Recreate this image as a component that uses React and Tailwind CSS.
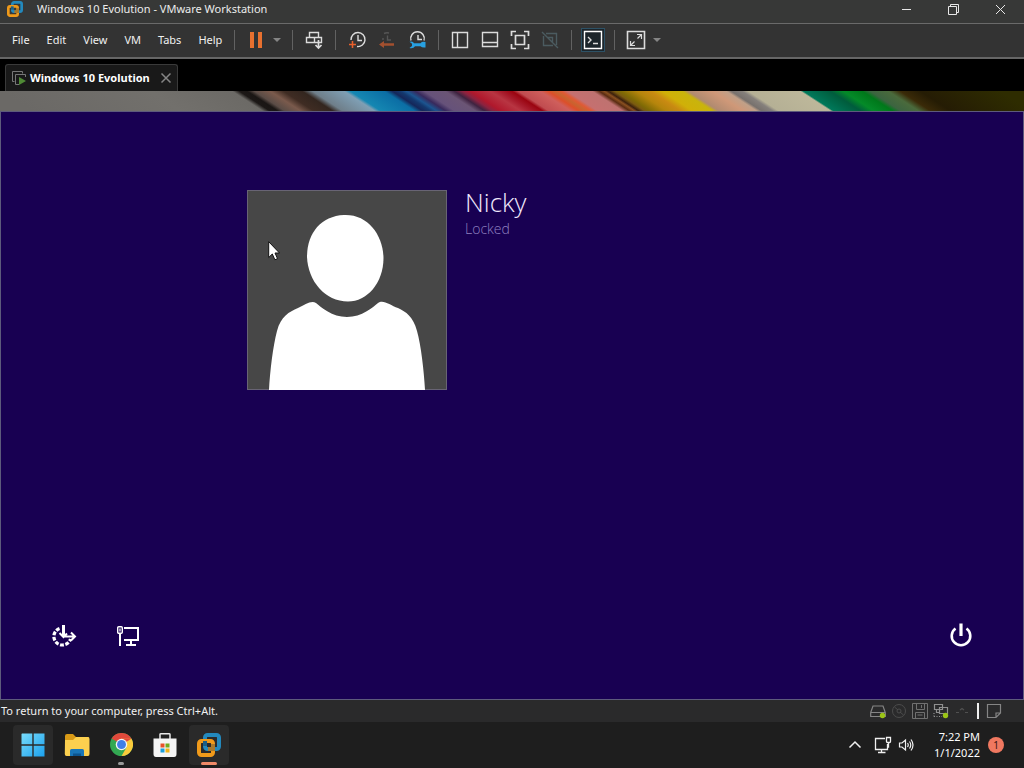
import React from "react";

const STRIPES = [
  [0, "#6b6966"], [150, "#72706c"], [232, "#6c6a66"], [239, "#1c1816"], [247, "#1a1614"], [254, "#5a4c46"],
  [270, "#7a5a4c"], [283, "#3f2c23"], [302, "#33261f"], [312, "#6f7f8a"], [344, "#7f9fb4"],
  [350, "#1587b2"], [384, "#0b6ea5"], [392, "#15275a"], [400, "#14386e"], [406, "#1c5590"],
  [415, "#38295c"], [424, "#66527a"], [445, "#6b5575"], [454, "#3f2340"], [462, "#8a2340"],
  [470, "#b0182c"], [490, "#b83542"], [500, "#a81c2c"], [512, "#9a0410"], [518, "#c04c50"], [540, "#cf5f5c"],
  [548, "#dc4f2a"], [555, "#c8642f"], [561, "#e05a35"], [567, "#c57070"], [592, "#bf7270"],
  [599, "#5a2c12"], [604, "#8a5020"], [608, "#3c200c"], [614, "#7a5a10"], [620, "#7f6a05"],
  [636, "#b5850c"], [650, "#c98a12"], [662, "#d0b008"], [682, "#c9b40c"], [688, "#b08a70"],
  [712, "#cf9878"], [726, "#c0a088"], [731, "#77716d"], [742, "#85807c"], [748, "#b5b095"],
  [800, "#bdb79a"], [803, "#00785a"], [830, "#005c3c"], [843, "#048a28"], [862, "#00781a"],
  [870, "#3c6440"], [888, "#4a6a3c"], [900, "#3a2a08"], [920, "#251c04"], [1000, "#2e2c00"],
];

function WallpaperStrip() {
  return (
    <svg className="block h-5 w-full" viewBox="0 0 1024 20" preserveAspectRatio="none" aria-hidden="true">
      <defs>
        <linearGradient id="stripes" gradientUnits="userSpaceOnUse" x1="0" y1="0" x2="1024" y2="0" gradientTransform="skewX(57)">
          {STRIPES.map(([x, color]) => (
            <stop key={x} offset={x / 1024} stopColor={color} />
          ))}
        </linearGradient>
      </defs>
      <rect width="1024" height="20" fill="url(#stripes)" />
    </svg>
  );
}

function VmwareLogo({ className }) {
  return (
    <svg className={className} viewBox="0 0 24 24" fill="none" strokeWidth="4" aria-hidden="true">
      <rect x="8" y="2" width="14" height="14" rx="2.5" stroke="#2389bd" />
      <rect x="2" y="8" width="14" height="14" rx="2.5" stroke="#f09a1a" />
      <path d="M8 13V8" stroke="#1b5f86" />
      <path d="M11 16H16V11" stroke="#a8792c" />
    </svg>
  );
}

function Icon({ children, className = "size-6", ...rest }) {
  return (
    <svg className={className} viewBox="0 0 24 24" fill="none" stroke="#dcdcdc" strokeWidth="1.4" aria-hidden="true" {...rest}>
      {children}
    </svg>
  );
}

function Tool({ label, children, className = "" }) {
  return (
    <button type="button" aria-label={label} className={`flex size-6 shrink-0 items-center justify-center ${className}`}>
      {children}
    </button>
  );
}

function Caret({ label }) {
  return (
    <button type="button" aria-label={label} className="ml-[3px] flex h-6 w-3 shrink-0 items-center justify-center">
      <svg className="h-1 w-2" viewBox="0 0 8 4" aria-hidden="true">
        <path d="M0 0H8L4 4Z" fill="#858585" />
      </svg>
    </button>
  );
}

function Separator() {
  return <div className="mx-[9px] h-5 w-px shrink-0 bg-[#626262]" />;
}

function TitleBar() {
  return (
    <header className="flex h-[23px] shrink-0 items-center bg-[#373837] pl-[7px]">
      <VmwareLogo className="mb-[6px] size-4" />
      <h1 className="mb-[5px] ml-[14px] grow text-[11px] leading-4 text-[#ececec]">Windows 10 Evolution - VMware Workstation</h1>
      <div className="mb-[5px] flex">
        <button type="button" aria-label="Minimize" className="flex h-4 w-[47px] items-center justify-center">
          <svg className="size-[11px]" viewBox="0 0 11 11" stroke="#e8e8e8" aria-hidden="true"><path d="M1 5.5H10" /></svg>
        </button>
        <button type="button" aria-label="Restore" className="flex h-4 w-[47px] items-center justify-center">
          <svg className="size-[11px]" viewBox="0 0 11 11" fill="none" stroke="#e8e8e8" aria-hidden="true">
            <path d="M.5 2.5H8.500V10.500H.5ZM2.500 2.500V.5H10.500V8.500H8.500" />
          </svg>
        </button>
        <button type="button" aria-label="Close" className="flex h-4 w-[47px] items-center justify-center">
          <svg className="size-[11px]" viewBox="0 0 11 11" stroke="#e8e8e8" aria-hidden="true"><path d="M1 1L10 10M10 1L1 10" /></svg>
        </button>
      </div>
    </header>
  );
}

function MenuBar() {
  return (
    <div className="flex h-9 shrink-0 items-center border-t border-b-2 border-t-[#6a6a6a] border-b-[#666666] bg-[#333333] pb-px">
      <nav className="flex gap-[17px] pr-[3px] pl-3 text-[11px] leading-4 text-[#f0f0f0]">
        {["File", "Edit", "View", "VM", "Tabs", "Help"].map((name) => (
          <button key={name} type="button">{name}</button>
        ))}
      </nav>
      <Separator />
      <Tool label="Suspend">
        <svg className="size-6" viewBox="0 0 24 24" fill="#e8702f" aria-hidden="true">
          <path d="M6 4H10V20H6ZM14 4H18V20H14Z" />
        </svg>
      </Tool>
      <Caret label="Power options" />
      <Separator />
      <Tool label="Send Ctrl+Alt+Del">
        <Icon>
          <path d="M7.500 4.500H16.500V9.500H7.500ZM4.500 9.500H12.500V14.500H4.500ZM12.500 9.500H19.500V14.500H12.500" />
          <path d="M16.500 12V20M13.500 17L16.500 20L19.500 17" strokeWidth="1.700" />
        </Icon>
      </Tool>
      <Separator />
      <div className="flex gap-[6px]">
        <Tool label="Take snapshot">
          <Icon>
            <path d="M6 12A7 7 0 1 1 12 18.500" />
            <path d="M13 7V12.500H17" />
            <path d="M7.500 13V20M4 16.500H11" stroke="#e8602c" strokeWidth="1.600" />
          </Icon>
        </Tool>
        <Tool label="Revert snapshot">
          <Icon>
            <path d="M9 5.500A7 7 0 0 1 14 5M12.500 7.500V12H16M8 10V12" stroke="#565656" />
            <path d="M4 16.500L9 13V15.300H19V17.700H9V20Z" fill="#a3502f" stroke="none" />
          </Icon>
        </Tool>
        <Tool label="Manage snapshots">
          <Icon>
            <path d="M6 12.500A6.800 6.800 0 1 1 19 12.500" />
            <path d="M13 7V11.500H17" />
            <path d="M9 15.200H15.500Q17 13.200 20.500 14V19.500Q17 20 15.500 18.200H10Q8.500 20.800 4.500 20L7 18V15.800L4.500 13.800Q8 12.800 9 15.200Z" fill="#28a0e0" stroke="none" />
          </Icon>
        </Tool>
      </div>
      <Separator />
      <div className="flex gap-[6px]">
        <Tool label="Show library">
          <Icon><path d="M4.500 4.500H19.500V19.500H4.500ZM9.500 4.500V19.500" /></Icon>
        </Tool>
        <Tool label="Show thumbnail bar">
          <Icon><path d="M4.500 4.500H19.500V18.500H4.500ZM4.500 14.500H19.500" /></Icon>
        </Tool>
        <Tool label="Full screen">
          <Icon><path d="M7.500 7.500H16.500V16.500H7.500ZM3.500 8V3.500H8M16 3.500H20.500V8M20.500 16V20.500H16M8 20.500H3.500V16" strokeWidth="1.700" /></Icon>
        </Tool>
        <Tool label="Unity">
          <Icon><path d="M5.500 8V17.500H15M8 5.500H18.500V17M9.500 9.500H14.500V14M4 4L20 20" stroke="#4b5b60" /></Icon>
        </Tool>
      </div>
      <Separator />
      <Tool label="Console view" className="border border-[#2d5165] bg-[#1c252b]">
        <Icon className="size-6 shrink-0">
          <path d="M3.500 3.500H20.500V20.500H3.500Z" stroke="#ffffff" />
          <path d="M7 9L10 12L7 15M12 15.500H17" />
        </Icon>
      </Tool>
      <Separator />
      <Tool label="Stretch guest">
        <Icon>
          <path d="M3.500 3.500H20.500V20.500H3.500Z" strokeWidth="1.600" />
          <path d="M13 6.500H17.500V11M11 17.500H6.500V13M7 17L10.500 13.500M13.500 10.500L17 7" strokeWidth="1.200" />
        </Icon>
      </Tool>
      <Caret label="Stretch options" />
    </div>
  );
}

function TabBar() {
  return (
    <div className="flex h-8 shrink-0 items-end bg-black pl-[5px]">
      <div className="flex h-[27px] items-center rounded-t-[3px] border border-b-0 border-[#3a3a3a] bg-[#191919] px-[5px]">
        <Icon className="size-4" viewBox="0 0 16 16" stroke="#777777" strokeWidth="1">
          <path d="M11.500 3.500V1.500H1.500V11.500H3.500M14.500 7V4.500H4.500V14.500H8" />
          <path d="M8 7L15 11L8 15Z" fill="#4f8a35" stroke="none" />
        </Icon>
        <span className="ml-[3px] text-[11px] leading-4 font-bold text-white">Windows 10 Evolution</span>
        <button type="button" aria-label="Close tab" className="ml-[10px]">
          <svg className="size-3" viewBox="0 0 12 12" stroke="#858585" strokeWidth="1.500" aria-hidden="true"><path d="M1.500 1.500L10.500 10.500M10.500 1.500L1.500 10.500" /></svg>
        </button>
      </div>
    </div>
  );
}

function Pointer() {
  return (
    <svg className="absolute top-[51px] left-[21px] h-5 w-3" viewBox="0 0 12 20" aria-hidden="true">
      <path d="M.7 .7V16.500L4.300 13L6.900 18.800L9.500 17.600L7 12H11.500Z" fill="#ffffff" stroke="#111111" strokeWidth="1" />
    </svg>
  );
}

function LockScreen() {
  return (
    <main className="flex grow flex-col justify-between border border-[#5d5a7c] bg-[#180052]">
      <section className="flex pt-[78px] pl-[246px]">
        <div className="relative size-[200px] shrink-0">
          <svg className="size-full" viewBox="0 0 200 200" role="img" aria-label="User picture">
            <rect x=".5" y=".5" width="199" height="199" fill="#474747" stroke="#686474" />
            <path d="M97 25C121 24 136 45 136.500 68C136.500 93 120 111.500 101 111.500C78 111.500 61 91 60 67C60 43 74 26 97 25Z" fill="#ffffff" />
            <path d="M22 200C23 181 26 156 30 141C34 126 42 122 51 118C58 115 64 110 69 113C74 117 85 127 100 127C115 127 126 117 131 113C136 109 143 115 151 118C159 122 166 126 170 141C174 155 177 181 178 200Z" fill="#ffffff" />
          </svg>
          <Pointer />
        </div>
        <div className="-mt-1 ml-[18px] font-['Open_Sans','Noto_Sans',sans-serif] font-light">
          <h2 className="text-[26px] leading-8 text-[#f0e8fc]">Nicky</h2>
          <p className="text-[14px] leading-[22px] text-[#9080c0]">Locked</p>
        </div>
      </section>
      <div className="flex items-center px-12 pb-[49px]">
        <button type="button" aria-label="Ease of access">
          <svg className="size-7" viewBox="0 0 28 28" fill="none" stroke="#ffffff" aria-hidden="true">
            <path d="M10.500 6.500A8.500 8.500 0 1 0 21.500 17" strokeWidth="3.200" strokeDasharray="3.800 1.500" />
            <path d="M14.500 3V14.500" strokeWidth="3" />
            <path d="M10.500 11L14.500 15L18 11.500M14 14.500H26M22 10.500L26 14.500L22 18.500" strokeWidth="2" />
          </svg>
        </button>
        <button type="button" aria-label="Network" className="ml-9">
          <svg className="size-7" viewBox="0 0 28 28" fill="none" stroke="#ffffff" strokeWidth="2" aria-hidden="true">
            <rect x="4.700" y="4.700" width="4.600" height="6.600" rx="1" strokeWidth="1.400" />
            <path d="M7 6.500V9.500" strokeWidth="1.200" />
            <path d="M7 11V24M11 6H25V18H11M18 18V22M13 23H23" />
          </svg>
        </button>
        <button type="button" aria-label="Power" className="ml-auto">
          <svg className="size-7" viewBox="0 0 28 28" fill="none" stroke="#ffffff" aria-hidden="true">
            <path d="M8.500 6.500A9.300 9.300 0 1 0 19.500 6.500" strokeWidth="2.600" />
            <path d="M14 1.500V14" strokeWidth="3.200" />
          </svg>
        </button>
      </div>
    </main>
  );
}

function StatusBar() {
  return (
    <div className="flex h-[22px] shrink-0 items-center bg-[#2a2a2b] pr-[22px] pl-px">
      <p className="grow text-[11px] leading-4 text-[#f0f0f0]">To return to your computer, press Ctrl+Alt.</p>
      <div className="flex items-center gap-[5px]">
        <Icon className="size-4" viewBox="0 0 16 16" stroke="#858585" strokeWidth="1.200">
          <path d="M.7 9.500L3 3H13L15.300 9.500V13.500H.7ZM.7 9.500H15.300" />
          <circle cx="12.500" cy="12.500" r="2.700" fill="#9bc417" stroke="none" />
        </Icon>
        <Icon className="size-4" viewBox="0 0 16 16" stroke="#4c4c4c" strokeWidth="1">
          <circle cx="8" cy="8" r="6.500" /><circle cx="8" cy="8" r="2" /><path d="M3.500 4L7 7M9 9L12.500 12" />
        </Icon>
        <Icon className="size-4" viewBox="0 0 16 16" stroke="#707070" strokeWidth="1">
          <path d="M.5 .5H15.500V15.500H.5ZM4.500 .5V6.500H12.500V.5M3.500 15.500V9.500H12.500V15.500M9.500 2V5M5.500 12H10.500" />
        </Icon>
        <Icon className="size-4" viewBox="0 0 16 16" stroke="#909090" strokeWidth="1.200">
          <path d="M1.500 1.500H9.500V6.500H1.500ZM6.500 6.500V4.500H14.500V10.500H6.500ZM3.500 7V9.500H6" />
          <path d="M1 13.500H9M1 10V15" strokeDasharray="1 1.500" />
          <circle cx="12.500" cy="12.500" r="2.700" fill="#9bc417" stroke="none" />
        </Icon>
        <Icon className="size-4" viewBox="0 0 16 16" stroke="#505050" strokeWidth="1.200">
          <path d="M2 9.500H5M6 7L8 5.500L10 7M11 9.500H14" />
        </Icon>
      </div>
      <div className="ml-[7px] h-4 w-[2px] bg-[#f0f0f0]" />
      <Icon className="ml-[7px] size-4" viewBox="0 0 16 16" stroke="#858585" strokeWidth="1.200">
        <path d="M1.500 1.500H14.500V10L10 14.500H1.500ZM10 14.500V10H14.500" />
      </Icon>
    </div>
  );
}

function TaskbarApp({ label, active, marker, children }) {
  return (
    <button
      type="button"
      aria-label={label}
      className={`relative flex size-10 items-center justify-center rounded ${active ? "bg-[#2a2a2a]" : ""}`}
    >
      {children}
      {marker && <span className={`absolute inset-x-0 bottom-0 mx-auto h-[3px] rounded-full ${marker}`} />}
    </button>
  );
}

function Taskbar() {
  return (
    <footer className="flex h-[46px] shrink-0 items-center bg-[#1e1e1e] pr-5 pb-px pl-[13px]">
      <div className="flex grow gap-1">
        <TaskbarApp label="Start" active>
          <svg className="size-6" viewBox="0 0 24 24" aria-hidden="true">
            <defs>
              <linearGradient id="start" x1="0" y1="0" x2="1" y2="1">
                <stop offset="0" stopColor="#79dcfb" /><stop offset="1" stopColor="#1ba1ee" />
              </linearGradient>
            </defs>
            <path d="M1 .5H11.300V11.300H.5V1ZM12.700 .5H23.500V11.300H12.700ZM.5 12.700H11.300V23.500H.5ZM12.700 12.700H23.500V23.500H12.700Z" fill="url(#start)" />
          </svg>
        </TaskbarApp>
        <TaskbarApp label="File Explorer">
          <svg className="h-[22px] w-[26px]" viewBox="0 0 26 22" aria-hidden="true">
            <path d="M1 2Q1 0 3 0H9L12 3H24Q25 3 25 5V12H1Z" fill="#d99a16" />
            <path d="M1 6H9L12 3H24Q25.500 3 25.500 5V20Q25.500 22 24 22H2.500Q.8 22 .8 20Z" fill="#fcd04f" />
            <path d="M6 22V16.500Q6 15 7.500 15H18.500Q20 15 20 16.500V22Z" fill="#1976b8" />
            <path d="M9 22V19.500H17V22Z" fill="#0c548e" />
          </svg>
        </TaskbarApp>
        <TaskbarApp label="Chrome" marker="w-[6px] bg-[#9a9a9a]">
          <svg className="size-[23px]" viewBox="0 0 48 48" aria-hidden="true">
            <circle cx="24" cy="24" r="24" fill="#33a852" />
            <path d="M24 24L3.200 12A24 24 0 0 1 44.800 12Z" fill="#e0483b" />
            <path d="M44.800 12A24 24 0 0 1 24 48L34.400 30L24 12Z" fill="#fbcb3c" />
            <path d="M3.200 12L13.600 30L24 24Z" fill="#33a852" />
            <path d="M24 12H44.800L34.400 18Z" fill="#e0483b" />
            <circle cx="24" cy="24" r="12" fill="#f4f4f4" />
            <circle cx="24" cy="24" r="9.300" fill="#3f7fe8" />
          </svg>
        </TaskbarApp>
        <TaskbarApp label="Microsoft Store">
          <svg className="size-6" viewBox="0 0 24 24" aria-hidden="true">
            <path d="M7 6V1.500Q7 .8 8 .8H16Q17 .8 17 1.500V6" fill="none" stroke="#e8e8e8" strokeWidth="1.500" />
            <path d="M.5 5.500H23.500V21Q23.500 24 21 24H3Q.5 24 .5 21Z" fill="#f5f5f5" />
            <path d="M7.500 10.500H11.500V14.500H7.500Z" fill="#e8522a" />
            <path d="M12.500 10.500H16.500V14.500H12.500Z" fill="#74ab1f" />
            <path d="M7.500 15.500H11.500V19.500H7.500Z" fill="#1c9fdc" />
            <path d="M12.500 15.500H16.500V19.500H12.500Z" fill="#f2b41a" />
          </svg>
        </TaskbarApp>
        <TaskbarApp label="VMware Workstation" active marker="w-4 bg-[#f08a68]">
          <VmwareLogo className="size-6" />
        </TaskbarApp>
      </div>
      <div className="flex items-center text-white">
        <button type="button" aria-label="Show hidden icons">
          <svg className="h-4 w-[14px]" viewBox="0 0 14 16" fill="none" stroke="#f0f0f0" strokeWidth="1.500" aria-hidden="true"><path d="M1.500 10.500L7 5L12.500 10.500" /></svg>
        </button>
        <button type="button" aria-label="Network status" className="ml-3">
          <svg className="size-[18px]" viewBox="0 0 18 18" fill="none" stroke="#f0f0f0" strokeWidth="1.300" aria-hidden="true">
            <path d="M11 2.500H1.500V13.500H13.500V8M7.500 13.500V16M4 16.500H11.500M12.500 1.500H16.500V5.500Q16.500 6.500 15.500 6.500H13.500Q12.500 6.500 12.500 5.500ZM14.500 6.500V11H13.500" />
          </svg>
        </button>
        <button type="button" aria-label="Volume" className="ml-[6px]">
          <svg className="size-4" viewBox="0 0 16 16" fill="none" stroke="#f0f0f0" strokeWidth="1.200" aria-hidden="true">
            <path d="M1.500 6V10H4L7.500 13V3L4 6ZM9.500 6Q11 8 9.500 10M11.500 4.500Q14 8 11.500 11.500M13 2.500Q17 8 13 13.500" />
          </svg>
        </button>
        <div className="ml-[14px] w-[52px] text-right text-[11px] leading-4 whitespace-nowrap">
          <p>7:22 PM</p>
          <p>1/1/2022</p>
        </div>
        <button type="button" aria-label="1 notification" className="ml-2 size-4 rounded-full bg-[#f07860] text-[10px] leading-4 text-[#3a1410]">
          1
        </button>
      </div>
    </footer>
  );
}

export default function App() {
  return (
    <div className="flex h-screen flex-col overflow-hidden bg-black font-['Noto_Sans','Open_Sans',sans-serif]">
      <TitleBar />
      <MenuBar />
      <TabBar />
      <WallpaperStrip />
      <LockScreen />
      <StatusBar />
      <Taskbar />
    </div>
  );
}
